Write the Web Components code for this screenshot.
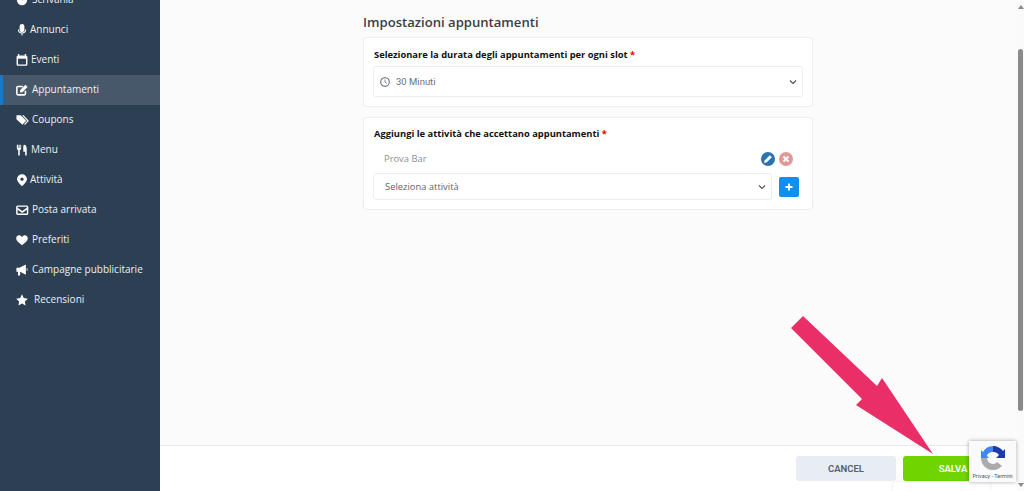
<!DOCTYPE html>
<html lang="it"><head><meta charset="utf-8"><title>Impostazioni appuntamenti</title>
<style>
html,body{margin:0;height:100%;overflow:hidden}
body{font-family:"Open Sans","Noto Sans",sans-serif}
</style></head><body>
<app-shell>
<side-bar slot="side">
<nav-item icon="gauge" gap="4">Scrivania</nav-item>
<nav-item icon="mic" gap="2">Annunci</nav-item>
<nav-item icon="cal" gap="3">Eventi</nav-item>
<nav-item icon="edit" gap="4" active>Appuntamenti</nav-item>
<nav-item icon="tag" gap="4">Coupons</nav-item>
<nav-item icon="fork" gap="3">Menu</nav-item>
<nav-item icon="pin" gap="2">Attività</nav-item>
<nav-item icon="mail" gap="4">Posta arrivata</nav-item>
<nav-item icon="heart" gap="4">Preferiti</nav-item>
<nav-item icon="horn" gap="4">Campagne pubblicitarie</nav-item>
<nav-item icon="star" gap="6">Recensioni</nav-item>
</side-bar>
<settings-page slot="main"></settings-page>
<foot-bar slot="foot"></foot-bar>
</app-shell>
<script>
const ICONS={
gauge:'<circle cx="7" cy="7" r="6" fill="#fff"/><path d="M7 7l3-3" stroke="#2d3f53" stroke-width="1.5"/>',
mic:'<rect x="4.2" y="0" width="5.600" height="9.500" rx="2.800" fill="#fff"/><path d="M2.800 6.500c0 5.500 8.400 5.500 8.400 0M7 10.500v3" stroke="#fff" stroke-width="1.200" fill="none"/>',
cal:'<path d="M3 0v3M11 0v3" stroke="#fff" stroke-width="1.6"/><rect x="1.500" y="2.500" width="11" height="10.500" rx="1" fill="none" stroke="#fff" stroke-width="1.700"/><rect x="1.500" y="2.500" width="11" height="3" fill="#fff"/>',
edit:'<path d="M11 8v3.500a1.200 1.200 0 0 1-1.200 1.200H2.200A1.200 1.200 0 0 1 1 11.500V4a1.200 1.200 0 0 1 1.200-1.200h5.800" fill="none" stroke="#fff" stroke-width="1.800"/><path d="M4.500 10l.5-3L11 1l2.500 2.500-6 6z" fill="#fff"/>',
tag:'<path d="M.5 1.500h5l6.500 6.500-4.500 4.500L.5 6z" fill="#fff"/><path d="M8 1.500l6 6.500-4 4.500" fill="none" stroke="#fff" stroke-width="1.400"/>',
fork:'<path d="M1 1v4.300c0 1 .8 1.600 1.600 1.900V13.500h1.800V7.200C5.200 6.900 6 6.300 6 5.300V1H5v3.500h-.7V1H3.500v3.500h-.7V1zM9.500 1C11.500 1 12.500 3 12.500 5.500v8h-1.800V9H8.500V4C8.500 2.200 8.900 1 9.500 1z" fill="#fff"/>',
pin:'<path fill-rule="evenodd" d="M7 .3a5.800 5.800 0 0 1 5.800 5.800c0 3.200-5.800 8-5.800 8S1.200 9.300 1.200 6.100A5.800 5.800 0 0 1 7 .3zm0 3.700a2 2 0 1 0 0 4 2 2 0 0 0 0-4z" fill="#fff"/>',
mail:'<rect x="1" y="2.500" width="12.500" height="9.500" rx="1" fill="none" stroke="#fff" stroke-width="1.700"/><path d="M1.500 4l5.750 4.200L13 4v2.300L7.250 10.500 1.500 6.300z" fill="#fff"/>',
heart:'<path d="M7 13C3 10 .2 7.800 .2 4.900A3.500 3.500 0 0 1 7 3.700a3.500 3.500 0 0 1 6.800 1.200C13.800 7.800 11 10 7 13z" fill="#fff"/>',
horn:'<path d="M.5 4.500h3.500l7.500-4v12L4.800 9v4.500H2.300V9H.5zM12.500 4.500a2.500 2.500 0 0 1 0 4z" fill="#fff"/>',
star:'<path d="M7 .3l2 4.500 4.800.6-3.500 3.300.9 4.800L7 11.200l-4.200 2.300.9-4.800L.2 5.400 5 4.800z" fill="#fff"/>'
};
const def=(n,html)=>customElements.define(n,class extends HTMLElement{connectedCallback(){if(this.shadowRoot)return;const r=this.attachShadow({mode:'open'});r.innerHTML=html;}});

def('app-shell',`<style>
:host{display:grid;grid-template-columns:160px 1fr 7px;grid-template-rows:1fr 45px;width:1024px;height:491px;position:relative;overflow:hidden;background:#fff}
.s{grid-row:1/3;min-height:0;overflow:hidden;display:block}
.m{min-width:0;min-height:0;overflow:hidden;background:#fbfbfb;border-bottom:1px solid #e9e9e9}
.f{min-width:0;background:#fff}
.sb{grid-column:3;grid-row:1/3;background:#fafafa;position:relative}
.sb i{position:absolute;left:1px;top:49px;width:5px;height:362px;background:#8a8a8a;border-radius:3px}
.sb b{position:absolute;left:1px;border-left:3px solid transparent;border-right:3px solid transparent}
.up{top:5px;border-bottom:4px solid #8a8a8a}.dn{bottom:4px;border-top:4px solid #8a8a8a}
svg.arrow{position:absolute;left:0;top:0;width:1024px;height:491px;pointer-events:none}
</style>
<div class="s"><slot name="side"></slot></div>
<div class="m"><slot name="main"></slot></div>
<div class="sb"><b class="up"></b><i></i><b class="dn"></b></div>
<div class="f"><slot name="foot"></slot></div>
<svg class="arrow" viewBox="0 0 1024 491"><polygon fill="#ea2e68" points="803,316 791,328 862,399 856,405 933,454 882,378 877,386"/></svg>
<re-badge></re-badge>`);

def('side-bar',`<style>
:host{display:block;height:100%;background:#2d3f53;color:#fff;overflow:hidden}
.l{display:flex;flex-direction:column;margin-top:-15px}
</style><div class="l"><slot></slot></div>`);

customElements.define('nav-item',class extends HTMLElement{connectedCallback(){if(this.shadowRoot)return;
const r=this.attachShadow({mode:'open'});
r.innerHTML=`<style>
:host{display:flex;align-items:center;height:30px;box-sizing:border-box;padding-left:16px;font:400 10px/1 "Open Sans",sans-serif;color:#eef1f4;white-space:nowrap}
:host([active]){background:#47586a;box-shadow:inset 3px 0 0 #1a78c9}
svg{width:12px;height:12px;flex:none;overflow:visible}
span{margin-left:${this.getAttribute('gap')||5}px;position:relative;top:-1px}
</style><svg viewBox="0 0 14 14">${ICONS[this.getAttribute('icon')]}</svg><span><slot></slot></span>`;}});

def('settings-page',`<style>
:host{display:block;padding:14px 0 0 203px;width:450px;font-family:"Open Sans",sans-serif}
h1{margin:0 0 7px;font-size:13.100px;line-height:16px;font-weight:600;color:#3a3f44}
.g{display:flex;flex-direction:column;gap:10px}
</style><h1>Impostazioni appuntamenti</h1><div class="g">
<form-card label="Selezionare la durata degli appuntamenti per ogni slot"><select-box clock text="30 Minuti"></select-box></form-card>
<form-card label="Aggiungi le attività che accettano appuntamenti" tight>
<biz-row name="Prova Bar"></biz-row>
<add-row></add-row></form-card></div>`);

customElements.define('form-card',class extends HTMLElement{connectedCallback(){if(this.shadowRoot)return;
const r=this.attachShadow({mode:'open'});
r.innerHTML=`<style>
:host{display:block;box-sizing:border-box;width:450px;background:#fff;border:1px solid #eee;border-radius:4px;padding:10px 9px 9px}
:host([tight]){padding:9px 9px 9px}
.t{font-size:9.350px;line-height:14px;font-weight:700;color:#111;margin-bottom:4px;padding-left:1px}
:host([tight]) .t{margin-bottom:3px}
em{font-style:normal;color:#e00}
</style><div class="t"></div><slot></slot>`;
const t=r.querySelector('.t');t.textContent=this.getAttribute('label')+' ';const e=document.createElement('em');e.textContent='*';t.append(e);}});

customElements.define('select-box',class extends HTMLElement{connectedCallback(){if(this.shadowRoot)return;
const r=this.attachShadow({mode:'open'});const c=this.hasAttribute('clock');
r.innerHTML=`<style>
:host{display:flex;align-items:center;box-sizing:border-box;height:${c?31:27}px;flex:1;min-width:0;background:#fff;border:1px solid #eee;border-radius:3px;padding:0 5px 0 ${c?6:11}px;font:400 ${c?'9.5px Roboto':'9.4px "Open Sans"'},sans-serif;color:${c?'#6d7278':'#5f6468'}}
.c{width:10px;height:10px;margin-right:6px;flex:none}
span{flex:1}
.d{width:8px;height:6px;flex:none}
</style>${c?'<svg class="c" viewBox="0 0 12 12"><circle cx="6" cy="6" r="5.200" fill="none" stroke="#6d7278" stroke-width="1.300"/><path d="M6 3v3.200l2.200 1.300" fill="none" stroke="#6d7278"/></svg>':''}<span></span><svg class="d" viewBox="0 0 8 6"><path d="M1 1.500l3 3 3-3" fill="none" stroke="#555" stroke-width="1.200"/></svg>`;
r.querySelector('span').textContent=this.getAttribute('text');}});

customElements.define('biz-row',class extends HTMLElement{connectedCallback(){if(this.shadowRoot)return;
const r=this.attachShadow({mode:'open'});
r.innerHTML=`<style>
:host{display:flex;align-items:center;height:29px;padding:0 10px 0 11px;font:400 9.400px "Open Sans",sans-serif;color:#8b8f93}
span{flex:1}
svg{width:14px;height:14px;margin-left:4px}
</style><span></span>
<svg viewBox="0 0 14 14"><circle cx="7" cy="7" r="7" fill="#2a73b3"/><path d="M3 11l.8-2.800 5-5 2 2-5 5z" fill="#fff"/></svg>
<svg viewBox="0 0 14 14"><circle cx="7" cy="7" r="7" fill="#df9a96"/><path d="M4.500 4.500l5 5M9.500 4.500l-5 5" stroke="#fff" stroke-width="1.800"/></svg>`;
r.querySelector('span').textContent=this.getAttribute('name');}});

def('add-row',`<style>
:host{display:flex;align-items:center;gap:7px;padding-right:4px}
button{width:20px;height:20px;border:0;border-radius:2px;background:#0f8ff0;padding:0;display:grid;place-items:center;flex:none}
svg{width:8px;height:8px}
</style><select-box text="Seleziona attività"></select-box><button aria-label="Aggiungi"><svg viewBox="0 0 8 8"><path d="M4 .5v7M.5 4h7" stroke="#fff" stroke-width="1.800"/></svg></button>`);

def('foot-bar',`<style>
:host{display:flex;justify-content:flex-end;align-items:flex-start;gap:7px;height:45px;box-sizing:border-box;padding:10px 0 0;position:relative;background:#fff}
button{height:25px;border:0;border-radius:3px;font:600 9.500px Roboto,sans-serif;padding:0}
.c{width:100px;background:#e8edf3;color:#55606c}
.s{width:100px;background:#6fd400;color:#fff;margin-right:14px}
.t{position:absolute;left:733px;top:36px;width:97px;height:9px;background:#fff;border-radius:3px 3px 0 0;box-shadow:0 0 3px rgba(0,0,0,.12)}
</style><button class="c">CANCEL</button><button class="s">SALVA</button><div class="t"></div>`);

def('re-badge',`<style>
:host{position:absolute;left:969px;top:441px;width:47px;height:41px;background:#fafafa;box-shadow:0 0 4px rgba(0,0,0,.35);display:block;font:400 5.500px Roboto,sans-serif;color:#555;text-align:center;overflow:hidden}
svg{display:block;width:26px;height:26px;margin:4px 0 0 11px}
div{position:absolute;left:0;right:0;bottom:3px;white-space:nowrap}
</style><svg viewBox="0 0 26 26"><path d="M13 1c4 0 8 2 10 5l2-2v9h-9l3-3a7 7 0 0 0-6-3z" fill="#1c3aa9"/><path d="M13 1A12 12 0 0 0 3 7L1 5v8h8l-2-2c0-2 3-4 6-4z" fill="#4285f4"/><path d="M1 13a12 12 0 0 0 12 12c4 0 7-2 9-4l-5-4c-1 1-2 2-4 2a6 6 0 0 1-6-6z" fill="#ababab"/></svg><div>Privacy - Termini</div>`);
</script></body></html>
